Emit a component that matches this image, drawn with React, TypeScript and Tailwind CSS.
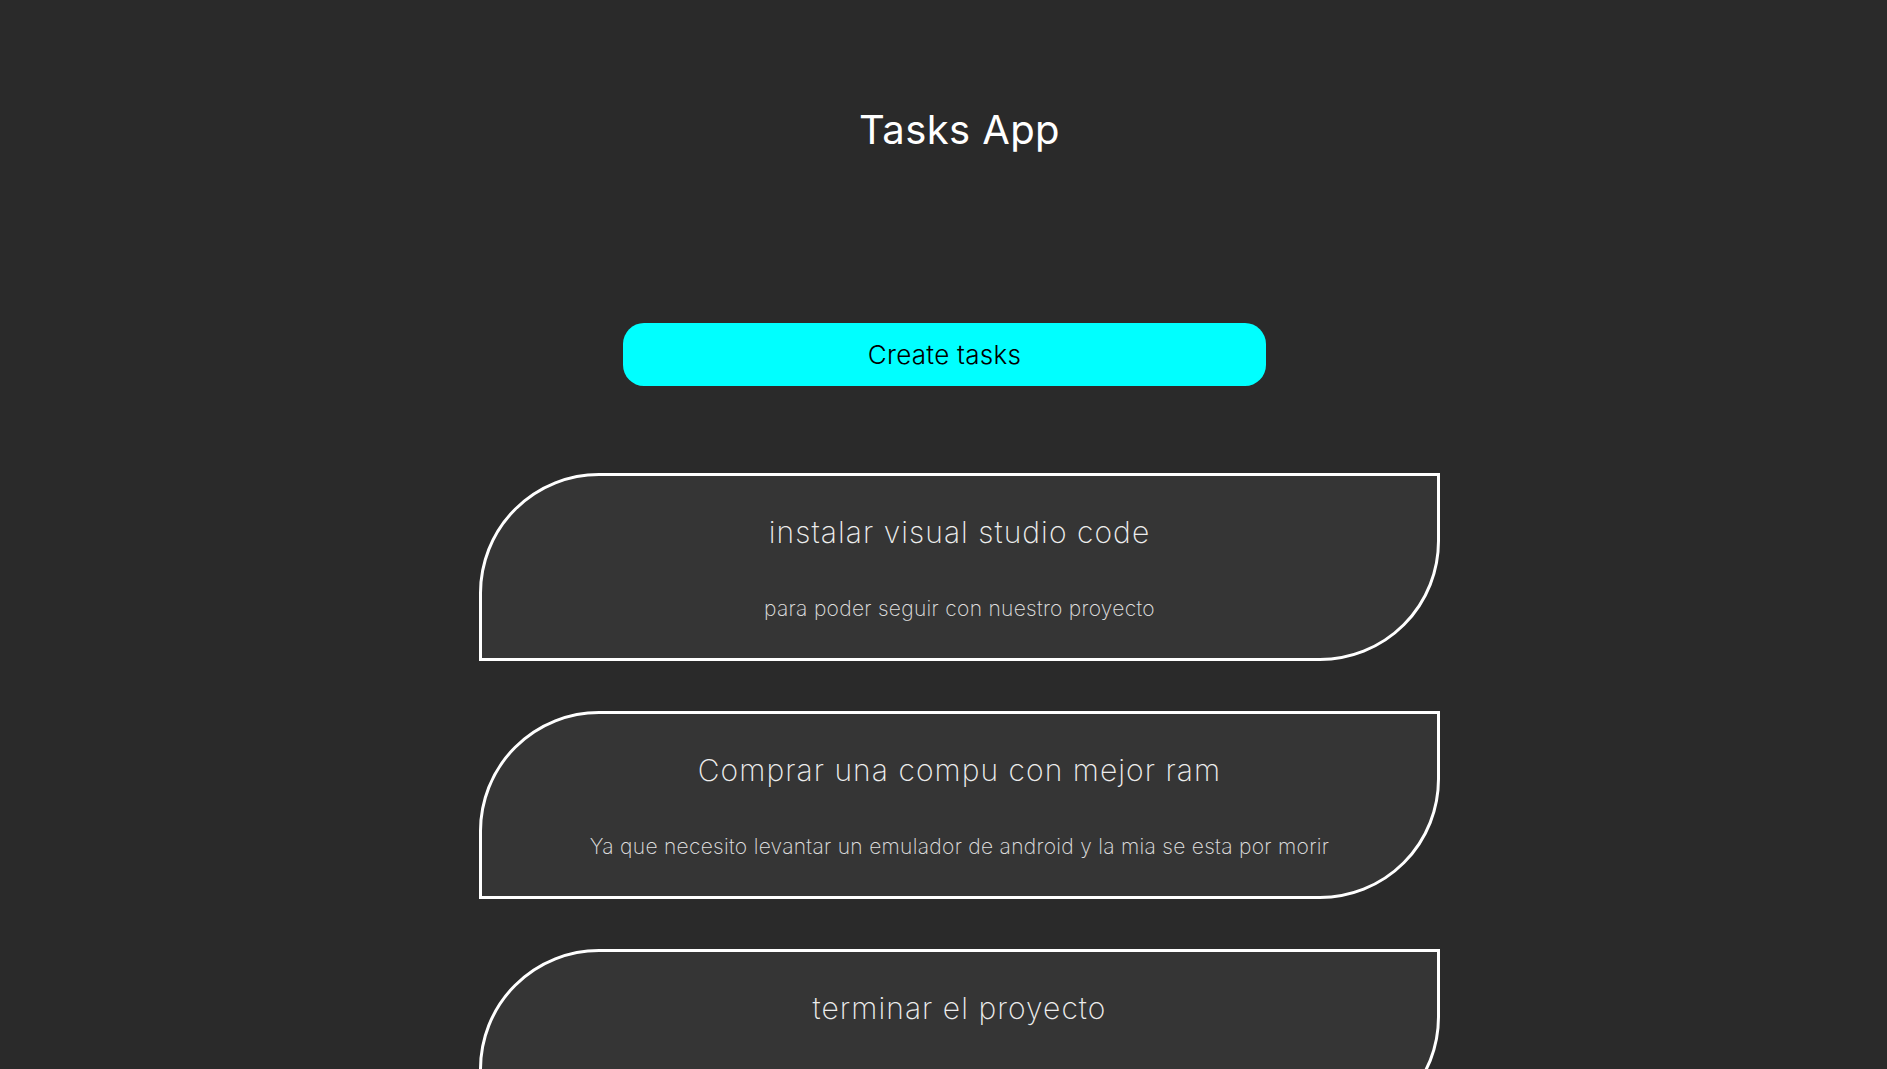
import React from "react";

const tasks = [
  { title: "instalar visual studio code", desc: "para poder seguir con nuestro proyecto" },
  {
    title: "Comprar una compu con mejor ram",
    desc: "Ya que necesito levantar un emulador de android y la mia se esta por morir",
  },
  { title: "terminar el proyecto", desc: "antes de la fecha de entrega" },
];

export default function App() {
  return (
    <div
      className="min-h-screen bg-[#2a2a2a] text-white"
      style={{ fontFamily: "Inter, 'Open Sans', sans-serif" }}
    >
      <div className="flex flex-col items-center pl-[32px] pt-[110px]">
        <h1 className="text-[40px] leading-[40px] font-normal tracking-[0.01em] text-white">Tasks App</h1>
      </div>
      <div className="mt-[173px] flex justify-center">
        <button className="w-[643px] h-[63px] rounded-[21px] bg-[#00ffff] text-black text-[26px] font-light tracking-[0.01em] ml-[2px]">
          Create tasks
        </button>
      </div>
      <ul className="mt-[87px] flex flex-col items-center gap-[50px] pl-[32px] pb-[40px]">
        {tasks.map((t) => (
          <li
            key={t.title}
            className="box-border w-[961px] h-[188px] shrink-0 border-[3px] border-white rounded-tl-[120px] rounded-br-[120px] bg-[#353535] flex flex-col items-center pt-[36px]"
          >
            <h2 className="text-[30px] leading-[40px] font-extralight tracking-[0.035em] text-[#ededed]">{t.title}</h2>
            <p className="mt-[42px] text-[21px] leading-[30px] font-extralight tracking-[0.014em] text-[#e0e0e0]">{t.desc}</p>
          </li>
        ))}
      </ul>
    </div>
  );
}
